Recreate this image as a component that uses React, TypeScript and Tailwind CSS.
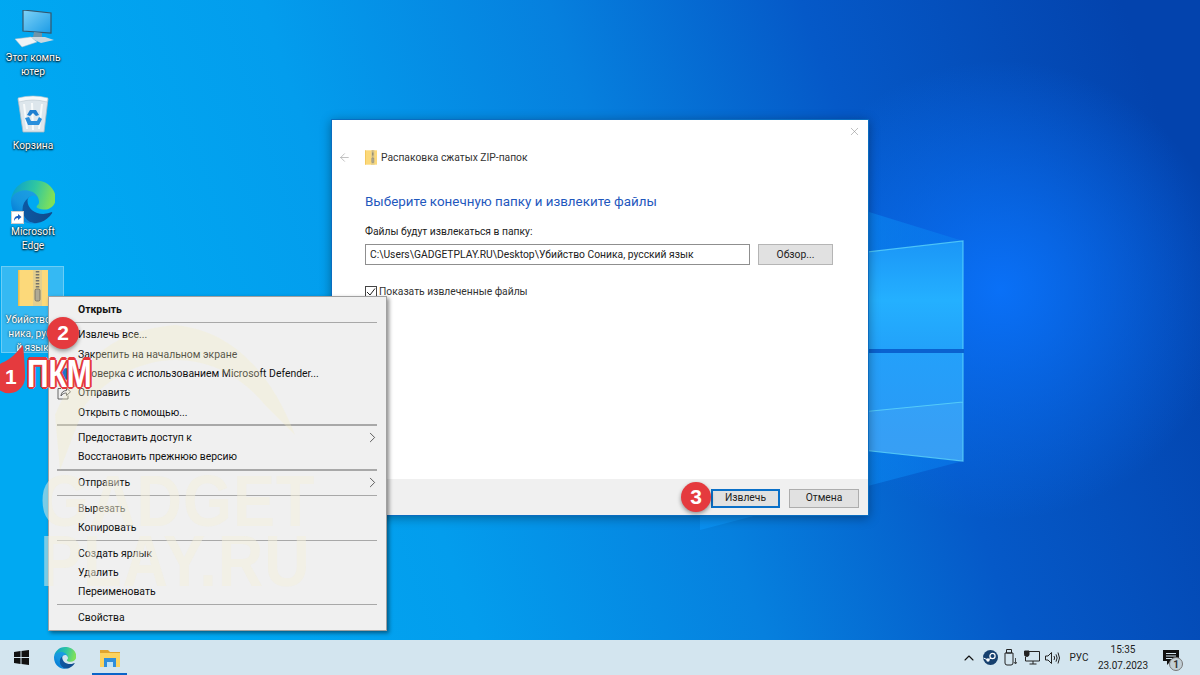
import { ChevronRight, ChevronUp, ArrowLeft, X } from "lucide-react";

type MenuEntry = { label?: string; bold?: boolean; sub?: boolean; icon?: "share" | "shield" };

const menu: MenuEntry[] = [
  { label: "Открыть", bold: true },
  {},
  { label: "Извлечь все..." },
  { label: "Закрепить на начальном экране" },
  { label: "Проверка с использованием Microsoft Defender...", icon: "shield" },
  { label: "Отправить", icon: "share" },
  { label: "Открыть с помощью..." },
  {},
  { label: "Предоставить доступ к", sub: true },
  { label: "Восстановить прежнюю версию" },
  {},
  { label: "Отправить", sub: true },
  {},
  { label: "Вырезать" },
  { label: "Копировать" },
  {},
  { label: "Создать ярлык" },
  { label: "Удалить" },
  { label: "Переименовать" },
  {},
  { label: "Свойства" },
];

function Wallpaper() {
  return (
    <svg className="absolute inset-0" width="1200" height="675" viewBox="0 0 1200 675">
      <defs>
        <linearGradient id="bg" gradientUnits="userSpaceOnUse" x1="150" y1="520" x2="1180" y2="170">
          <stop offset="0" stopColor="#00a9f2" />
          <stop offset="0.25" stopColor="#039ded" />
          <stop offset="0.5" stopColor="#0680de" />
          <stop offset="0.72" stopColor="#0559c8" />
          <stop offset="1" stopColor="#0343ad" />
        </linearGradient>
        <radialGradient id="glow" gradientUnits="userSpaceOnUse" cx="1000" cy="290" r="230">
          <stop offset="0" stopColor="#0a72fa" stopOpacity="0.95" />
          <stop offset="1" stopColor="#0a72fa" stopOpacity="0" />
        </radialGradient>
        <linearGradient id="cone" x1="0" y1="0" x2="1" y2="0">
          <stop offset="0" stopColor="#0a90f0" stopOpacity="0.9" />
          <stop offset="1" stopColor="#0a80f0" stopOpacity="0.5" />
        </linearGradient>
        <linearGradient id="upper" x1="0" y1="0" x2="0" y2="1">
          <stop offset="0" stopColor="#1b96f7" />
          <stop offset="0.55" stopColor="#24b0ff" />
          <stop offset="1" stopColor="#22a2fa" />
        </linearGradient>
        <linearGradient id="lower" x1="0" y1="0" x2="0" y2="1">
          <stop offset="0" stopColor="#24a0fa" />
          <stop offset="1" stopColor="#2c98f4" />
        </linearGradient>
      </defs>
      <rect width="1200" height="675" fill="url(#bg)" />
      <rect width="1200" height="675" fill="url(#glow)" />
      <polygon points="700,160 963,241 963,461 700,530" fill="url(#cone)" />
      <polygon points="780,262 963,241 963,349 780,349" fill="url(#upper)" />
      <polygon points="780,353 963,353 963,461 780,441" fill="url(#lower)" />
      <polygon points="780,420 963,402 963,461 780,441" fill="#ffffff" fillOpacity="0.06" />
      <path d="M780 262 L963 241 V349 M963 353 V461 L780 441 M780 420 L963 402" fill="none" stroke="#62d9fa" strokeOpacity="0.75" strokeWidth="1.2" />
      <rect x="780" y="349" width="184" height="4" fill="#0a62d0" />
    </svg>
  );
}

function ThisPc() {
  return (
    <svg width="44" height="38" viewBox="0 0 44 38">
      <defs>
        <linearGradient id="scr" x1="0" y1="0" x2="1" y2="1">
          <stop offset="0" stopColor="#7fd3f8" />
          <stop offset="1" stopColor="#1a9be6" />
        </linearGradient>
      </defs>
      <polygon points="12,0 40,3 40,23 12,21" fill="url(#scr)" stroke="#35566c" strokeWidth="1.2" />
      <polygon points="23,22 31,23 31,27 22,27" fill="#6f94a8" />
      <polygon points="17,27 34,27 43,30 30,33" fill="#c9d8e0" />
      <polygon points="4,29 20,27 26,32 11,37" fill="#eef3f6" stroke="#aebfc9" strokeWidth="0.5" />
    </svg>
  );
}

function RecycleBin() {
  return (
    <svg width="32" height="38" viewBox="0 0 32 38">
      <path d="M1 4 L31 4 L27 37 L6 37 Z" fill="#dde6ec" stroke="#a9bac5" strokeWidth="0.8" />
      <path d="M1 3 Q16 -1 31 3 L30 7 Q16 3 2 7 Z" fill="#f5f8fa" stroke="#b8c6cf" strokeWidth="0.6" />
      <path d="M7 9 L10 34 M15 8 L16 35 M25 9 L22 34" stroke="#f7fafb" strokeWidth="2" />
      <path d="M13 15 L19 15 L22 20 L19 21 L16 18 L13 21 L10 20 Z" fill="#1f7fd0" />
      <path d="M8 23 L12 22 L14 26 L20 26 L22 22 L25 24 L22 30 L11 30 Z" fill="#2a8fdc" />
    </svg>
  );
}

function EdgeLogo({ size, prefix }: { size: number; prefix: string }) {
  return (
    <svg width={size} height={size} viewBox="0 0 256 256">
      <defs>
        <linearGradient id={`${prefix}A`} gradientUnits="userSpaceOnUse" x1="60" y1="190" x2="240" y2="190">
          <stop offset="0" stopColor="#0c59a4" />
          <stop offset="1" stopColor="#114a8b" />
        </linearGradient>
        <linearGradient id={`${prefix}B`} gradientUnits="userSpaceOnUse" x1="150" y1="100" x2="45" y2="215">
          <stop offset="0" stopColor="#1b9de2" />
          <stop offset="0.6" stopColor="#1595df" />
          <stop offset="1" stopColor="#0680d7" />
        </linearGradient>
        <linearGradient id={`${prefix}C`} gradientUnits="userSpaceOnUse" x1="25" y1="50" x2="240" y2="110">
          <stop offset="0" stopColor="#0fa5c8" />
          <stop offset="0.5" stopColor="#30c7a0" />
          <stop offset="1" stopColor="#7fe05a" />
        </linearGradient>
      </defs>
      <path fill={`url(#${prefix}A)`} d="M235 186c-4 2-7 4-11 5-12 4-24 7-37 7-49 0-91-34-91-77 0-12 7-22 17-28-44 2-55 48-55 75 0 76 70 83 85 83 8 0 21-2 28-5l1 0c28-10 52-29 68-54 1-2-1-5-5-6z" />
      <path fill={`url(#${prefix}B)`} d="M106 241c-9-6-17-13-23-22-27-37-19-89 18-115 4-3 8-6 12-8 3-1 9-4 16-4 10 0 20 5 26 13 4 6 6 12 6 19 0 0 25-81-81-81C36 43 0 85 0 122c0 20 4 39 12 57 28 60 97 89 160 68-22 6-45 3-66-6z" />
      <path fill={`url(#${prefix}C)`} d="M152 149c-1 1-3 3-3 6 0 3 2 5 5 8 15 10 43 9 43 9 11 0 22-3 31-9 20-11 32-32 32-54 0-23-8-39-12-46C226 19 179 0 128 0 58 0 1 56 0 126c1-37 37-67 81-67 4 0 24 0 43 10 17 9 25 20 32 30 6 11 7 25 7 30 0 6-3 14-11 20z" />
    </svg>
  );
}

function ZipFolder({ w, h }: { w: number; h: number }) {
  return (
    <svg width={w} height={h} viewBox="0 0 30 36">
      <rect x="0" y="0" width="30" height="36" fill="#fcd97a" />
      <rect x="0" y="0" width="1.5" height="36" fill="#eebd4a" />
      <rect x="15" y="0" width="9" height="36" fill="#e4cf8e" />
      <path d="M19.5 1 L19.5 22" stroke="#74726a" strokeWidth="3.5" strokeDasharray="1.5 1.5" />
      <rect x="17" y="19" width="5" height="12" rx="1.5" fill="#b0aa94" stroke="#6f6b5d" strokeWidth="0.8" />
    </svg>
  );
}

function DesktopIcon({ label, className, children }: { label: React.ReactNode; className: string; children: React.ReactNode }) {
  return (
    <div className={`absolute flex w-[66px] flex-col items-center text-center ${className}`}>
      {children}
      <div className="text-[10.2px] leading-[14px] text-white [text-shadow:0_0_2px_#000,0_1px_2px_#000]">{label}</div>
    </div>
  );
}

function Badge({ n, className }: { n: number; className: string }) {
  return (
    <div className={`absolute flex items-center justify-center rounded-full bg-[#e53a3e] text-[21px] font-bold text-white shadow-[0_2px_4px_rgba(0,0,0,0.4)] font-['Liberation_Sans',sans-serif] ${className}`}>
      {n}
    </div>
  );
}

function ContextMenu() {
  return (
    <div className="absolute top-[296px] left-[48px] flex w-[339px] flex-col border border-[#a0a0a0] bg-[#f0f0f0] pt-[3px] pr-[9px] pb-[3px] pl-[8px] shadow-[2px_2px_4px_rgba(0,0,0,0.45)]">
      {menu.map((item, i) =>
        item.label ? (
          <div key={i} className={`relative flex h-[19.3px] items-center pl-[21px] text-[10.4px] text-[#111] ${item.bold ? "font-bold" : ""}`}>
            {item.icon === "share" && (
              <svg width="14" height="13" viewBox="0 0 14 13" fill="none" stroke="#555" strokeWidth="0.9" className="absolute left-0">
                <path d="M4 1.5 H1 V12 H11 V8.5" />
                <path d="M4 9 C4 5.5 6.5 3.5 9.5 3.5 V1 L13.5 4.8 L9.5 8.5 V6 C7 6 5 7 4 9 Z" />
              </svg>
            )}
            {item.icon === "shield" && (
              <svg width="10" height="12" viewBox="0 0 10 12" className="absolute left-[4px]">
                <path d="M5 0 L10 2 V6 C10 9 7.5 11 5 12 C2.5 11 0 9 0 6 V2 Z" fill="#1e74c8" />
              </svg>
            )}
            <span className="whitespace-nowrap">{item.label}</span>
            {item.sub && <ChevronRight size={17} strokeWidth={1.1} className="absolute right-[-4px] text-[#333]" />}
          </div>
        ) : (
          <div key={i} className="my-[2.4px] h-[1.5px] w-full shrink-0 bg-[#a8a8a8]" />
        ),
      )}
    </div>
  );
}

function ExtractDialog() {
  return (
    <div className="absolute top-[119px] left-[331px] flex h-[397px] w-[538px] flex-col border border-[#0a6cc0] bg-white shadow-[0_2px_10px_rgba(0,0,0,0.35)]">
      <div className="flex justify-end pt-[5px] pr-[7px]">
        <X size={13} strokeWidth={1} className="text-[#8a8a8a]" />
      </div>
      <div className="flex items-center pt-[12px] pl-[6px]">
        <ArrowLeft size={13} strokeWidth={1.4} className="text-[#aeaeae]" />
        <div className="ml-[14px] flex">
          <ZipFolder w={12} h={15} />
        </div>
        <span className="ml-[4px] text-[10.3px] leading-[15px] text-[#333]">Распаковка сжатых ZIP-папок</span>
      </div>
      <div className="flex flex-1 flex-col pr-[35px] pl-[33px]">
        <h1 className="mt-[27px] text-[13.4px] leading-[20px] text-[#1f58bd]">Выберите конечную папку и извлеките файлы</h1>
        <div className="mt-[13px] text-[10.3px] leading-[14px] text-[#222]">Файлы будут извлекаться в папку:</div>
        <div className="mt-[5px] flex items-center justify-between">
          <div className="flex h-[21px] w-[385px] items-center border border-[#8f8f8f] pl-[4px] text-[10.3px] text-[#222]">
            C:\Users\GADGETPLAY.RU\Desktop\Убийство Соника, русский язык
          </div>
          <div className="flex h-[21px] w-[75px] items-center justify-center border border-[#b5b5b5] bg-[#e1e1e1] text-[10.3px] text-[#222]">Обзор...</div>
        </div>
        <label className="mt-[20px] flex items-center gap-[2px] text-[10.3px] leading-[14px] text-[#333]">
          <span className="flex h-[12px] w-[12px] items-center justify-center border border-[#444]">
            <svg width="10" height="10" viewBox="0 0 10 10"><path d="M1 5 L4 8 L9 1.5" fill="none" stroke="#222" strokeWidth="1" /></svg>
          </span>
          Показать извлеченные файлы
        </label>
      </div>
      <div className="flex h-[36px] items-center justify-end gap-[9px] bg-[#f0f0f0] pt-[2px] pr-[9px] text-[10.3px] text-[#222]">
        <div className="flex h-[19px] w-[69px] items-center justify-center border-2 border-[#0a70c8] bg-[#e1e1e1]">Извлечь</div>
        <div className="flex h-[19px] w-[70px] items-center justify-center border border-[#adadad] bg-[#e1e1e1]">Отмена</div>
      </div>
    </div>
  );
}

function Taskbar() {
  return (
    <div className="flex h-[35px] w-full items-center bg-[#d3e5ef] pl-[14px] text-[#222]">
      <svg width="15" height="15" viewBox="0 0 15 15" fill="#111">
        <polygon points="0,2 6.5,1 6.5,7 0,7" />
        <polygon points="7.5,1 15,0 15,7 7.5,7" />
        <polygon points="0,8 6.5,8 6.5,14 0,13" />
        <polygon points="7.5,8 15,8 15,15 7.5,14" />
      </svg>
      <div className="ml-[25px] flex">
        <EdgeLogo size={22} prefix="tb" />
      </div>
      <div className="relative ml-[16px] flex h-full w-[35px] items-center justify-center">
        <svg width="20" height="18" viewBox="0 0 20 18">
          <path d="M0 1 H8 L10 3 H20 V6 H0 Z" fill="#e0a52f" />
          <rect y="4" width="20" height="14" fill="#fbd35f" />
          <rect x="4" y="9" width="12" height="9" fill="#2f8fdc" />
          <rect x="7" y="13" width="6" height="5" fill="#bfe3f8" />
        </svg>
        <div className="absolute bottom-0 left-0 h-[2px] w-full bg-[#0a64c8]" />
      </div>
      <div className="ml-auto flex items-center pr-[7px]">
        <div className="flex w-[20px] justify-center">
          <ChevronUp size={16} strokeWidth={1.6} className="text-[#111]" />
        </div>
        <div className="flex w-[22px] justify-center">
          <svg width="15" height="15" viewBox="0 0 15 15">
            <circle cx="7.5" cy="7.5" r="7.5" fill="#16406e" />
            <circle cx="9.5" cy="6" r="2.6" fill="none" stroke="#fff" strokeWidth="1.2" />
            <circle cx="5" cy="10" r="1.7" fill="#fff" />
            <path d="M0.5 8 L5 10 L8 8" stroke="#fff" strokeWidth="1" fill="none" />
          </svg>
        </div>
        <div className="flex w-[18px] justify-center">
          <svg width="13" height="17" viewBox="0 0 13 17" fill="none" stroke="#222" strokeWidth="1">
            <path d="M2.5 0.5 H7.5 V4 H2.5 Z" />
            <path d="M1 4 H9 V14 Q9 16 7 16 H3 Q1 16 1 14 Z" />
            <path d="M11.5 9 V14.5 M10 13 L11.5 15 L13 13" strokeWidth="0.8" />
          </svg>
        </div>
        <div className="flex w-[26px] justify-center">
          <svg width="16" height="15" viewBox="0 0 16 15" fill="none" stroke="#222" strokeWidth="1">
            <path d="M4 1.5 H15.5 V11 H1.5 V7" />
            <path d="M9 11 V14 M5.5 14 H12.5" />
            <path d="M0.5 1 H5 V4.5 Q5 6.5 2.75 6.5 Q0.5 6.5 0.5 4.5 Z" fill="#222" />
          </svg>
        </div>
        <div className="flex w-[16px] justify-center">
          <svg width="16" height="14" viewBox="0 0 16 14" fill="none" stroke="#222" strokeWidth="1">
            <path d="M0.5 5 H3 L6.5 1.5 V12.5 L3 9 H0.5 Z" />
            <path d="M9 5 Q10.3 7 9 9 M11 3.3 Q13.2 7 11 10.7 M13 1.5 Q16 7 13 12.5" />
          </svg>
        </div>
        <span className="w-[36px] text-center text-[10px]">РУС</span>
        <div className="w-[52px] text-center text-[10px] leading-[16px]">
          <div>15:35</div>
          <div>23.07.2023</div>
        </div>
        <div className="relative flex w-[44px] justify-center">
          <svg width="16" height="15" viewBox="0 0 16 15">
            <path d="M0 0 H16 V11 H8 L4 15 V11 H0 Z" fill="#111" />
            <path d="M3 3.5 H13 M3 6 H13 M3 8.5 H9" stroke="#d3e5ef" strokeWidth="1" />
          </svg>
          <div className="absolute top-[7px] left-[20px] flex h-[14px] w-[14px] items-center justify-center rounded-full border border-[#777] bg-[#c2cfd6] text-[10px] font-bold text-[#333]">1</div>
        </div>
      </div>
    </div>
  );
}

export default function App() {
  return (
    <div className="relative flex h-[675px] w-[1200px] flex-col overflow-hidden font-['Roboto',sans-serif]">
      <Wallpaper />
      <main className="relative flex-1">
        <DesktopIcon label={<>Этот компь<br />ютер</>} className="top-[10px] left-0"><div className="mb-[3px] flex"><ThisPc /></div></DesktopIcon>
        <DesktopIcon label="Корзина" className="top-[95px] left-0"><div className="mb-[6px] flex"><RecycleBin /></div></DesktopIcon>
        <DesktopIcon label={<>Microsoft<br />Edge</>} className="top-[180px] left-0">
          <div className="relative mb-[1px] flex">
            <EdgeLogo size={44} prefix="dt" />
            <div className="absolute bottom-0 left-0 flex h-[13px] w-[13px] items-center justify-center border border-[#ccc] bg-white">
              <svg width="9" height="9" viewBox="0 0 9 9"><path d="M1 8 C1 4 3 3 5 3 V1 L8.5 4 L5 7 V5 C3 5 2 6 1 8 Z" fill="#1c5fc0" /></svg>
            </div>
          </div>
        </DesktopIcon>
        <div className="absolute top-[266px] left-[1px] flex h-[87px] w-[63px] flex-col items-center border border-[#6bcdf5] bg-[#35b9f3]">
          <div className="mt-[3px] flex"><ZipFolder w={30} h={36} /></div>
          <div className="mt-[7px] text-center text-[10.2px] leading-[14px] whitespace-nowrap text-white [text-shadow:0_0_2px_#000]">Убийство С<br />ника, русс<br />й язык</div>
        </div>

        <ExtractDialog />
        <ContextMenu />

        {/* водяной знак поверх меню */}
        <svg className="absolute top-[320px] left-[50px]" width="250" height="150" viewBox="0 0 250 150">
          <path d="M5 95 C30 35 70 10 125 5 C180 10 220 50 245 115 L215 85 C190 55 160 40 125 40 C95 40 60 55 35 85 L10 150 Z" fill="#f4edc4" fillOpacity="0.3" />
        </svg>
        <div className="absolute top-[471px] left-[40px] origin-top scale-y-[1.15] text-[63px] leading-[52px] font-bold tracking-[1px] text-[#f3efdc]/50 font-['Liberation_Sans',sans-serif]">
          GADGET<br />PLAY.RU
        </div>

        <div className="absolute top-[358px] left-[27px] origin-top scale-y-[1.3] text-[30px] leading-[24px] font-bold text-white [text-shadow:2px_0_0_#e5383c,-2px_0_0_#e5383c,0_2px_0_#e5383c,0_-2px_0_#e5383c,1px_1px_0_#e5383c,-1px_-1px_0_#e5383c,1px_-1px_0_#e5383c,-1px_1px_0_#e5383c] font-['Liberation_Sans',sans-serif]">ПКМ</div>
        <svg className="absolute top-[344px] left-0" width="26" height="50" viewBox="0 0 26 50">
          <path d="M23 1 C17 9 10 15 4 18 A16 16 0 1 0 25 33 C25 22 24 12 23 1 Z" fill="#e53a3e" />
        </svg>
        <span className="absolute top-[365px] left-[5px] text-[21px] leading-[24px] font-bold text-white font-['Liberation_Sans',sans-serif]">1</span>
        <Badge n={2} className="top-[317px] left-[47px] h-[32px] w-[32px]" />
        <Badge n={3} className="top-[482px] left-[681px] h-[30px] w-[30px]" />
      </main>
      <div className="relative">
        <Taskbar />
      </div>
    </div>
  );
}
